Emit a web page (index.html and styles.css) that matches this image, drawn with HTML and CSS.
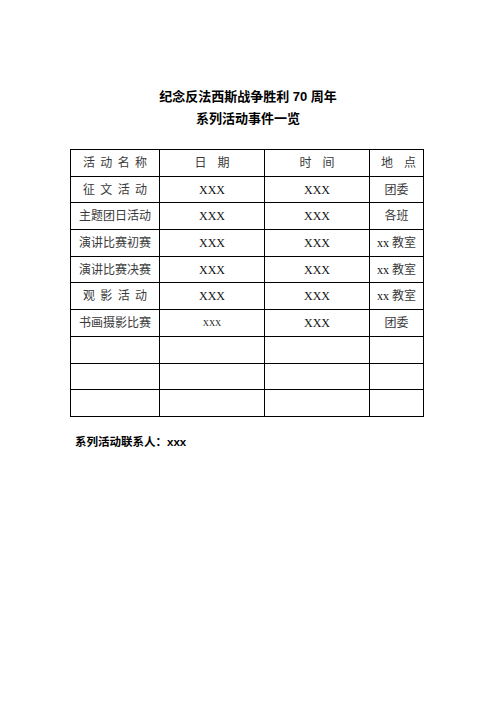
FILE: index.html
```html
<!DOCTYPE html>
<html lang="zh-CN">
<head>
<meta charset="utf-8">
<title>系列活动事件一览</title>
<link rel="stylesheet" href="styles.css">
</head>
<body>
<div class="page">
  <h1 class="title">纪念反法西斯战争胜利 70 周年<br>系列活动事件一览</h1>
  <table class="events">
    <colgroup>
      <col class="c1"><col class="c2"><col class="c3"><col class="c4">
    </colgroup>
    <tr><td><span class="s4">活动名称</span></td><td><span class="s2">日期</span></td><td><span class="s2">时间</span></td><td><span class="s2 dk">地点</span></td></tr>
    <tr><td><span class="s4">征文活动</span></td><td class="x">XXX</td><td class="x">XXX</td><td>团委</td></tr>
    <tr><td>主题团日活动</td><td class="x">XXX</td><td class="x">XXX</td><td>各班</td></tr>
    <tr><td>演讲比赛初赛</td><td class="x">XXX</td><td class="x">XXX</td><td><span class="lat">xx</span> 教室</td></tr>
    <tr><td>演讲比赛决赛</td><td class="x">XXX</td><td class="x">XXX</td><td><span class="lat">xx</span> 教室</td></tr>
    <tr><td><span class="s4">观影活动</span></td><td class="x">XXX</td><td class="x">XXX</td><td><span class="lat">xx</span> 教室</td></tr>
    <tr><td>书画摄影比赛</td><td class="x small">XXX</td><td class="x">XXX</td><td>团委</td></tr>
    <tr><td></td><td></td><td></td><td></td></tr>
    <tr><td></td><td></td><td></td><td></td></tr>
    <tr><td></td><td></td><td></td><td></td></tr>
  </table>
  <p class="contact">系列活动联系人：xxx</p>
</div>
</body>
</html>
```
FILE: styles.css
```css
html, body {
  margin: 0;
  padding: 0;
  background: #ffffff;
}
.page {
  width: 496px;
  padding-top: 86px;
}
.title {
  margin: 0;
  text-align: center;
  font-family: "Liberation Sans", "Noto Sans CJK SC", sans-serif;
  font-weight: bold;
  font-size: 13px;
  line-height: 22px;
  color: #000;
}
.events {
  margin: 19px 0 0 70px;
  border-collapse: collapse;
  width: 353px;
  table-layout: fixed;
  font-family: "Liberation Serif", "Noto Sans CJK SC", serif;
  font-size: 12px;
  color: #3a3a3a;
}
.c1 { width: 89px; }
.c2 { width: 105px; }
.c3 { width: 105px; }
.c4 { width: 54px; }
.events tr { height: 26.7px; }
.events td {
  border: 1px solid #000;
  padding: 0;
  text-align: center;
  vertical-align: middle;
  line-height: 14px;
  white-space: nowrap;
}
.s4 {
  letter-spacing: 5.3px;
  padding-left: 5.3px;
}
.s2 {
  letter-spacing: 11px;
  padding-left: 11px;
}
.x {
  color: #111;
  font-size: 12px;
}
.x.small {
  font-size: 8.5px;
}
.lat {
  color: #111;
}
.contact {
  margin: 17px 0 0 75px;
  font-family: "Liberation Sans", "Noto Sans CJK SC", sans-serif;
  font-weight: bold;
  font-size: 11.5px;
  line-height: 16px;
  color: #000;
}
```
